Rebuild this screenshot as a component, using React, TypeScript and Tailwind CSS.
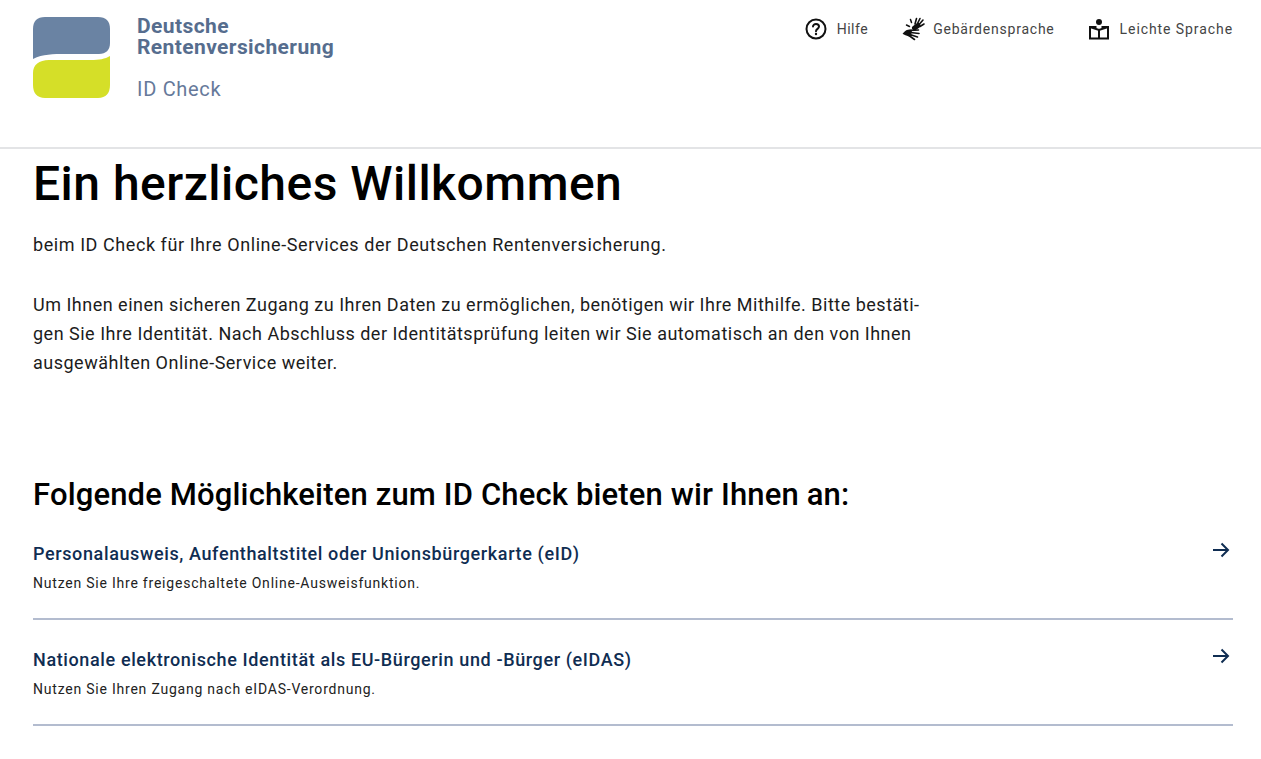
const sans = "font-['Roboto',sans-serif]";

function Logo() {
  return (
    <svg width="78" height="82" viewBox="0 0 78 82" className="shrink-0">
      <path d="M0 12C0 4 4 0 12 0H65C73 0 77 4 77 12V26C77 33 73 37 66 37H32C20 37 10 37 0 42Z" fill="#6a83a3" />
      <path d="M77 39V68C77 76 73 81 65 81H12C4 81 0 76 0 68V56C0 48 6 43 16 43H58C66 43 72 42 77 39Z" fill="#d5df28" />
    </svg>
  );
}

function HelpIcon() {
  return (
    <svg width="22" height="22" viewBox="0 0 22 22" fill="none" stroke="#111" strokeWidth="2">
      <circle cx="11" cy="11" r="9.5" />
      <path d="M8 8.600C8 6.900 9.300 6 11 6s3 1 3 2.600c0 2.200-3 2.300-3 4.600" strokeLinecap="round" />
      <circle cx="11" cy="16" r="1.200" fill="#111" stroke="none" />
    </svg>
  );
}

function SignIcon() {
  return (
    <svg width="24" height="24" viewBox="0 0 24 24" fill="none" stroke="#111" strokeLinecap="round" className="-mr-[3px]">
      {/* upper hand */}
      <path d="M12.500 11 16 8.500" strokeWidth="5" />
      <path d="M13 7 14.500 1.500M15.500 6.500 18 1.500M17.500 7 21 3M18 9.500 22 7" strokeWidth="1.600" />
      {/* motion marks */}
      <path d="M8.500 2.500 9.500 5.500M4.500 8 7.500 9.500" strokeWidth="1.500" />
      {/* lower hand */}
      <path d="M2 16.500C4 14 6 13 9 13.500L8 18.500C6 18 4 18 2 16.500Z" fill="#111" strokeWidth="2" />
      <path d="M8 13.500 16.500 13M8.500 15.500 17 16.500M8 17.500 15.500 20M7 18.500 12.500 22.500" strokeWidth="1.600" />
    </svg>
  );
}

function ReadIcon() {
  return (
    <svg width="22" height="24" viewBox="0 0 22 24" fill="none" stroke="#111" strokeWidth="2" className="-ml-[1px]">
      <circle cx="11" cy="5" r="3" fill="#111" stroke="none" />
      <path d="M8.500 10H2V21.500H20V10H13.500" />
      <path d="M2 10 11 13 20 10M11 13V21.500" />
    </svg>
  );
}

function NavItem({ icon, label, spacing }: { icon: React.ReactNode; label: string; spacing: string }) {
  return (
    <a className={`flex items-center gap-[10px] text-[14px] text-[#444] ${spacing}`}>
      {icon}
      <span>{label}</span>
    </a>
  );
}

function OptionRow({ title, text }: { title: string; text: string }) {
  return (
    <a className="flex justify-between border-b-2 border-[#b3bccf] h-[106px] pt-[28px]">
      <div>
        <div className="text-[18px] leading-[24px] font-medium tracking-[0.62px] text-[#0f2d52]">{title}</div>
        <div className="mt-[8px] text-[14px] leading-[18px] tracking-[0.78px] text-[#222]">{text}</div>
      </div>
      <svg width="18" height="16" viewBox="0 0 18 16" fill="none" stroke="#0f2d52" strokeWidth="2" className="mr-[3px]">
        <path d="M1 8h15M9.500 1.500 16 8l-6.500 6.500" />
      </svg>
    </a>
  );
}

export default function App() {
  return (
    <div className={`min-h-[759px] bg-white ${sans} overflow-hidden`}>
      <header className="flex justify-between h-[149px] border-b-2 border-[#e3e4e6] pl-[33px] pr-[28px] pt-[17px]">
        <div className="flex">
          <Logo />
          <div className="ml-[26px] text-[#566d8e]">
            <div className="-mt-[1px] text-[21px] leading-[21px] font-bold tracking-[0.4px]">Deutsche<br />Rentenversicherung</div>
            <div className="mt-[19px] text-[20px] leading-[24px] tracking-[0.7px] text-[#66799a]">ID Check</div>
          </div>
        </div>
        <nav className="flex gap-[34px] h-[24px]">
          <NavItem icon={<HelpIcon />} label="Hilfe" spacing="tracking-[0.5px]" />
          <NavItem icon={<SignIcon />} label="Gebärdensprache" spacing="tracking-[0.78px]" />
          <NavItem icon={<ReadIcon />} label="Leichte Sprache" spacing="tracking-[0.92px]" />
        </nav>
      </header>

      <main className="pl-[33px] pr-[28px]">
        <h1 className="text-[48px] leading-[70px] font-medium tracking-[0.48px] text-black">Ein herzliches Willkommen</h1>
        <p className="mt-[11px] text-[18px] leading-[30px] tracking-[0.57px] text-[#1c1c1c]">beim ID Check für Ihre Online-Services der Deutschen Rentenversicherung.</p>
        <p className="mt-[30px] text-[18px] leading-[29px] tracking-[0.5px] text-[#1c1c1c]">
          Um Ihnen einen sicheren Zugang zu Ihren Daten zu ermöglichen, benötigen wir Ihre Mithilfe. Bitte bestäti-<br />
          gen Sie Ihre Identität. Nach Abschluss der Identitätsprüfung leiten wir Sie automatisch an den von Ihnen<br />
          ausgewählten Online-Service weiter.
        </p>
        <h2 className="mt-[99px] text-[31px] leading-[38px] font-medium tracking-[0.15px] text-black">Folgende Möglichkeiten zum ID Check bieten wir Ihnen an:</h2>
        <OptionRow title="Personalausweis, Aufenthaltstitel oder Unionsbürgerkarte (eID)" text="Nutzen Sie Ihre freigeschaltete Online-Ausweisfunktion." />
        <OptionRow title="Nationale elektronische Identität als EU-Bürgerin und -Bürger (eIDAS)" text="Nutzen Sie Ihren Zugang nach eIDAS-Verordnung." />
      </main>
    </div>
  );
}
